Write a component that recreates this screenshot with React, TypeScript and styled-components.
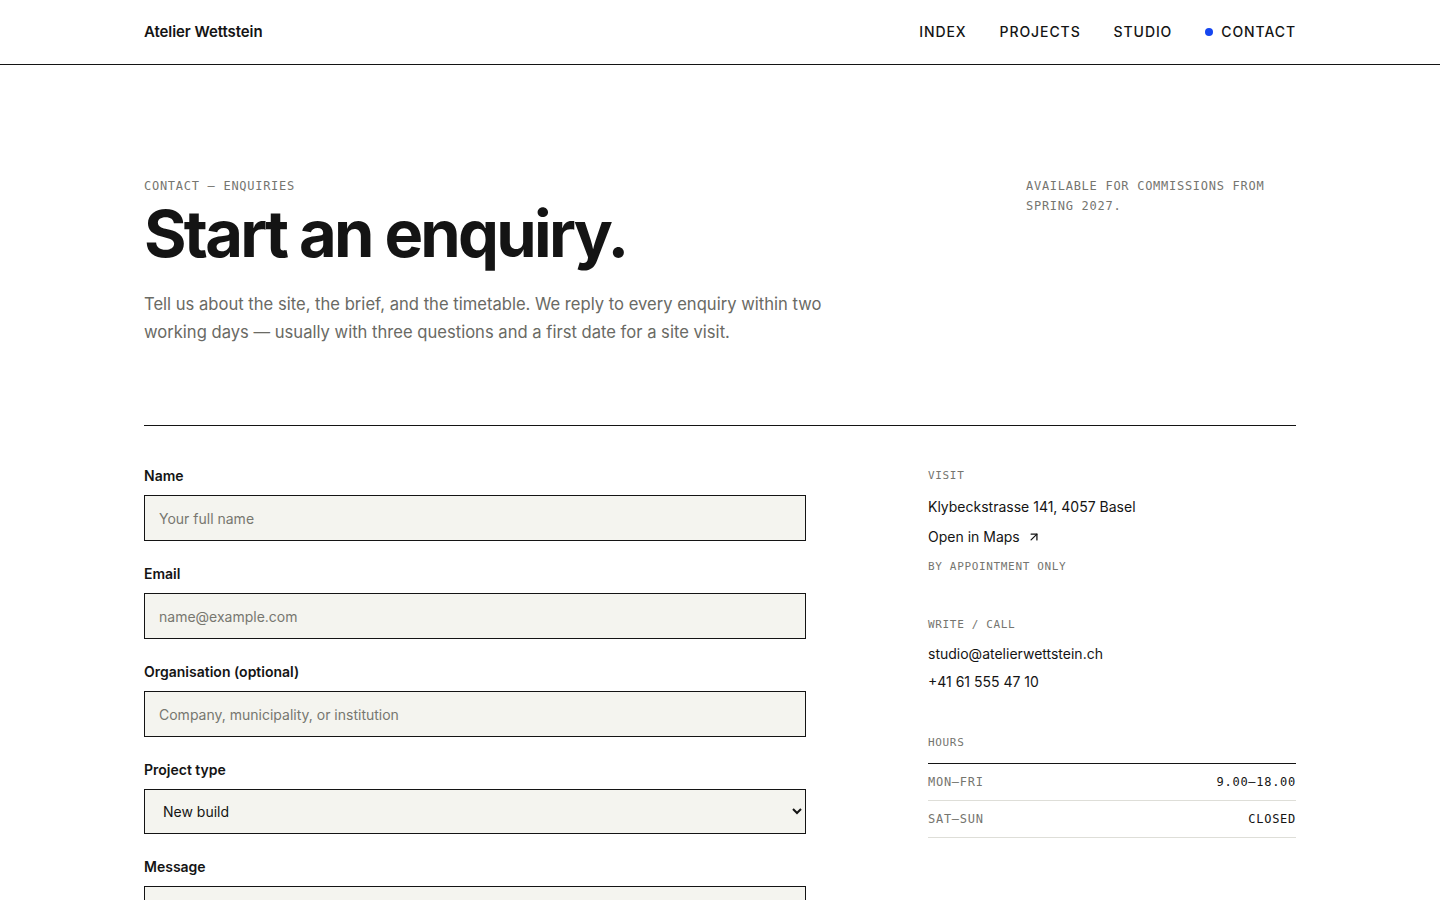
import React from 'react';
import styled, { createGlobalStyle } from 'styled-components';
import { ArrowUpRight } from 'lucide-react';

const GlobalStyle = createGlobalStyle`
  * { box-sizing: border-box; }
  body {
    margin: 0;
    background: #fff;
    color: #141414;
    font-family: Inter, "Noto Sans", sans-serif;
    -webkit-font-smoothing: antialiased;
  }
`;

const mono = `"DejaVu Sans Mono", "Liberation Mono", monospace`;

const Header = styled.header`
  height: 65px;
  border-bottom: 1px solid #141414;
`;

const HeaderInner = styled.div`
  max-width: 1152px;
  margin: 0 auto;
  height: 100%;
  display: flex;
  align-items: center;
  justify-content: space-between;
  padding-bottom: 1px;
`;

const Logo = styled.a`
  font-size: 15px;
  font-weight: 600;
  letter-spacing: -0.005em;
  color: #141414;
  text-decoration: none;
`;

const Nav = styled.nav`
  display: flex;
  gap: 33px;
`;

const NavLink = styled.a<{ $active?: boolean }>`
  display: flex;
  align-items: center;
  gap: 8px;
  font-size: 14px;
  font-weight: 500;
  letter-spacing: 0.065em;
  color: #141414;
  text-decoration: none;

  &::before {
    content: '';
    display: ${(p) => (p.$active ? 'block' : 'none')};
    width: 8px;
    height: 8px;
    border-radius: 50%;
    background: #1546f0;
  }
`;

const Main = styled.main`
  max-width: 1152px;
  margin: 0 auto;
`;

const Hero = styled.section`
  display: flex;
  justify-content: space-between;
  padding: 114px 0 79px;
  border-bottom: 1px solid #141414;
`;

const HeroText = styled.div`
  display: flex;
  flex-direction: column;
`;

const Eyebrow = styled.div`
  font-family: ${mono};
  font-size: 12px;
  letter-spacing: 0.06em;
  color: #75756f;
  line-height: 14px;
`;

const Title = styled.h1`
  margin: 6px 0 0;
  font-size: 65px;
  font-weight: 700;
  letter-spacing: -0.042em;
  line-height: 70px;
  color: #141414;
`;

const Lead = styled.p`
  margin: 21px 0 0;
  max-width: 700px;
  font-size: 16.6px;
  line-height: 28px;
  color: #6a6a64;
`;

const Availability = styled.div`
  width: 270px;
  font-family: ${mono};
  font-size: 12px;
  letter-spacing: 0.06em;
  line-height: 20px;
  color: #75756f;
  margin-top: -3px;
`;

const Content = styled.section`
  display: grid;
  grid-template-columns: 662px 368px;
  justify-content: space-between;
  padding-top: 40px;
`;

const Form = styled.form`
  display: flex;
  flex-direction: column;
  gap: 23px;
`;

const Field = styled.label`
  display: flex;
  flex-direction: column;
  gap: 9px;
`;

const LabelText = styled.span`
  font-size: 14px;
  font-weight: 600;
  line-height: 20px;
  color: #141414;
`;

const Input = styled.input`
  height: 46px;
  border: 1px solid #141414;
  border-radius: 0;
  background: #f4f4ef;
  padding: 0 14px;
  font-family: inherit;
  font-size: 14px;
  color: #141414;
  outline: none;

  &::placeholder {
    color: #77776f;
  }
`;

const Select = styled.select`
  height: 45px;
  border: 1px solid #141414;
  border-radius: 0;
  background: #f4f4ef;
  padding: 0 14px;
  font-family: inherit;
  font-size: 14px;
  color: #141414;
  outline: none;
`;

const TextArea = styled.textarea`
  height: 160px;
  border: 1px solid #141414;
  border-radius: 0;
  background: #f4f4ef;
  padding: 14px;
  font-family: inherit;
  font-size: 14px;
  resize: vertical;
  outline: none;
`;

const Aside = styled.aside`
  display: flex;
  flex-direction: column;
  gap: 44px;
  margin-top: 3px;
`;

const Block = styled.div<{ $top?: number }>`
  display: flex;
  flex-direction: column;
  margin-top: ${(p) => p.$top ?? 0}px;
`;

const BlockLabel = styled.div<{ $gap?: number }>`
  font-family: ${mono};
  font-size: 11px;
  letter-spacing: 0.06em;
  line-height: 14px;
  color: #75756f;
  margin-bottom: ${(p) => p.$gap ?? 14}px;
`;

const Line = styled.div`
  font-size: 14px;
  line-height: 28px;
  color: #141414;
`;

const MapLink = styled.a`
  display: inline-flex;
  align-items: center;
  gap: 7px;
  font-size: 14px;
  line-height: 32px;
  color: #141414;
  text-decoration: none;
`;

const Note = styled.div`
  font-family: ${mono};
  font-size: 11px;
  letter-spacing: 0.06em;
  line-height: 14px;
  color: #75756f;
  margin-top: 7px;
`;

const Hours = styled.div`
  border-top: 1px solid #141414;
`;

const HoursRow = styled.div`
  display: flex;
  justify-content: space-between;
  align-items: center;
  height: 37px;
  border-bottom: 1px solid #deded8;
  font-family: ${mono};
  font-size: 12px;
  letter-spacing: 0.06em;
`;

const Day = styled.span`
  color: #75756f;
`;

const Time = styled.span`
  color: #141414;
`;

export default function App() {
  return (
    <>
      <GlobalStyle />
      <Header>
        <HeaderInner>
          <Logo href="#">Atelier Wettstein</Logo>
          <Nav>
            <NavLink href="#">INDEX</NavLink>
            <NavLink href="#">PROJECTS</NavLink>
            <NavLink href="#">STUDIO</NavLink>
            <NavLink href="#" $active>
              CONTACT
            </NavLink>
          </Nav>
        </HeaderInner>
      </Header>
      <Main>
        <Hero>
          <HeroText>
            <Eyebrow>CONTACT — ENQUIRIES</Eyebrow>
            <Title>Start an enquiry.</Title>
            <Lead>
              Tell us about the site, the brief, and the timetable. We reply to every enquiry
              within two working days — usually with three questions and a first date for a
              site visit.
            </Lead>
          </HeroText>
          <Availability>AVAILABLE FOR COMMISSIONS FROM SPRING 2027.</Availability>
        </Hero>
        <Content>
          <Form onSubmit={(e) => e.preventDefault()}>
            <Field>
              <LabelText>Name</LabelText>
              <Input placeholder="Your full name" />
            </Field>
            <Field>
              <LabelText>Email</LabelText>
              <Input type="email" placeholder="name@example.com" />
            </Field>
            <Field>
              <LabelText>Organisation (optional)</LabelText>
              <Input placeholder="Company, municipality, or institution" />
            </Field>
            <Field>
              <LabelText>Project type</LabelText>
              <Select defaultValue="new">
                <option value="new">New build</option>
                <option value="renovation">Renovation</option>
                <option value="competition">Competition</option>
                <option value="other">Other</option>
              </Select>
            </Field>
            <Field>
              <LabelText>Message</LabelText>
              <TextArea />
            </Field>
          </Form>
          <Aside>
            <Block>
              <BlockLabel $gap={10}>VISIT</BlockLabel>
              <Line>Klybeckstrasse 141, 4057 Basel</Line>
              <MapLink href="#">
                Open in Maps <ArrowUpRight size={14} strokeWidth={2.2} />
              </MapLink>
              <Note>BY APPOINTMENT ONLY</Note>
            </Block>
            <Block>
              <BlockLabel $gap={8}>WRITE / CALL</BlockLabel>
              <Line>studio@atelierwettstein.ch</Line>
              <Line>+41 61 555 47 10</Line>
            </Block>
            <Block $top={-4}>
              <BlockLabel $gap={13}>HOURS</BlockLabel>
              <Hours>
                <HoursRow>
                  <Day>MON–FRI</Day>
                  <Time>9.00–18.00</Time>
                </HoursRow>
                <HoursRow>
                  <Day>SAT–SUN</Day>
                  <Time>CLOSED</Time>
                </HoursRow>
              </Hours>
            </Block>
          </Aside>
        </Content>
      </Main>
    </>
  );
}
